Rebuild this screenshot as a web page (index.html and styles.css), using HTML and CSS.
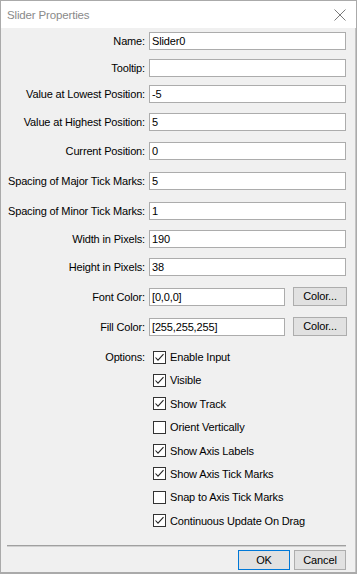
FILE: index.html
```html
<!DOCTYPE html>
<html>
<head>
<meta charset="utf-8">
<link rel="stylesheet" href="styles.css">
</head>
<body>
<div class="window">
  <div class="titlebar">
    <span class="title">Slider Properties</span>
    <svg class="close" width="12" height="12" viewBox="0 0 12 12"><path d="M0.5 0.5 L11.5 11.5 M11.5 0.5 L0.5 11.5" stroke="#7a7a7a" stroke-width="1" fill="none"/></svg>
  </div>
  <div class="content">
    <div class="form">
      <div class="row r1"><label>Name:</label><div class="field">Slider0</div></div>
      <div class="row r2"><label>Tooltip:</label><div class="field"></div></div>
      <div class="row r3"><label>Value at Lowest Position:</label><div class="field">-5</div></div>
      <div class="row r4"><label>Value at Highest Position:</label><div class="field">5</div></div>
      <div class="row r5"><label>Current Position:</label><div class="field">0</div></div>
      <div class="row r6"><label>Spacing of Major Tick Marks:</label><div class="field">5</div></div>
      <div class="row r7"><label>Spacing of Minor Tick Marks:</label><div class="field">1</div></div>
      <div class="row r8"><label>Width in Pixels:</label><div class="field">190</div></div>
      <div class="row r9"><label>Height in Pixels:</label><div class="field">38</div></div>
      <div class="row r10"><label>Font Color:</label><div class="combo"><div class="field short">[0,0,0]</div><div class="btn color">Color...</div></div></div>
      <div class="row r11"><label>Fill Color:</label><div class="combo"><div class="field short">[255,255,255]</div><div class="btn color">Color...</div></div></div>
      <div class="row opts"><label>Options:</label>
        <div class="checks">
          <div class="check"><span class="box on"><svg width="13" height="13" viewBox="0 0 13 13"><path d="M2.5 6.5 L5 9.2 L10.5 3.2" stroke="#222" stroke-width="1.1" fill="none"/></svg></span>Enable Input</div>
          <div class="check"><span class="box on"><svg width="13" height="13" viewBox="0 0 13 13"><path d="M2.5 6.5 L5 9.2 L10.5 3.2" stroke="#222" stroke-width="1.1" fill="none"/></svg></span>Visible</div>
          <div class="check"><span class="box on"><svg width="13" height="13" viewBox="0 0 13 13"><path d="M2.5 6.5 L5 9.2 L10.5 3.2" stroke="#222" stroke-width="1.1" fill="none"/></svg></span>Show Track</div>
          <div class="check"><span class="box"></span>Orient Vertically</div>
          <div class="check"><span class="box on"><svg width="13" height="13" viewBox="0 0 13 13"><path d="M2.5 6.5 L5 9.2 L10.5 3.2" stroke="#222" stroke-width="1.1" fill="none"/></svg></span>Show Axis Labels</div>
          <div class="check"><span class="box on"><svg width="13" height="13" viewBox="0 0 13 13"><path d="M2.5 6.5 L5 9.2 L10.5 3.2" stroke="#222" stroke-width="1.1" fill="none"/></svg></span>Show Axis Tick Marks</div>
          <div class="check"><span class="box"></span>Snap to Axis Tick Marks</div>
          <div class="check"><span class="box on"><svg width="13" height="13" viewBox="0 0 13 13"><path d="M2.5 6.5 L5 9.2 L10.5 3.2" stroke="#222" stroke-width="1.1" fill="none"/></svg></span>Continuous Update On Drag</div>
        </div>
      </div>
    </div>
    <div class="separator"></div>
    <div class="buttons">
      <div class="btn ok">OK</div>
      <div class="btn cancel">Cancel</div>
    </div>
  </div>
</div>
</body>
</html>
```
FILE: styles.css
```css
* { box-sizing: border-box; }
html, body { margin: 0; padding: 0; }
body {
  font-family: "Liberation Sans", Arial, sans-serif;
  font-size: 11px;
  letter-spacing: -0.15px;
  color: #000;
  background: #fff;
}
.window {
  width: 357px;
  height: 574px;
  border: 1px solid #aaaaaa;
  border-bottom-width: 2px;
  display: flex;
  flex-direction: column;
  background: #f0f0f0;
}
.titlebar {
  height: 27px;
  background: #fff;
  display: flex;
  align-items: center;
  justify-content: space-between;
  padding: 0 10px 0 6px;
  flex: none;
}
.title {
  font-size: 11.5px;
  color: #8a8a8a;
}
.close { display: block; }
.content {
  flex: 1;
  display: flex;
  flex-direction: column;
  padding: 4px 9px 0 0;
  border-right: 1px solid #c4c4c4;
}
.form {
  display: flex;
  flex-direction: column;
}
.row {
  display: grid;
  grid-template-columns: 144px 1fr;
  column-gap: 4px;
  align-items: center;
  height: 18px;
}
.r1 { margin-bottom: 9px; }
.r2 { margin-bottom: 8px; }
.r3 { margin-bottom: 10px; }
.r4 { margin-bottom: 11px; }
.r5 { margin-bottom: 12px; }
.r6 { margin-bottom: 12px; }
.r7 { margin-bottom: 10px; }
.r8 { margin-bottom: 10px; }
.r9 { margin-bottom: 11px; }
.r10 { margin-bottom: 12px; }
.r11 { margin-bottom: 14px; }
label {
  text-align: right;
  white-space: nowrap;
}
.field {
  height: 18px;
  background: #fff;
  border: 1px solid #acacac;
  padding: 0 2px;
  line-height: 16px;
  white-space: nowrap;
}
.combo {
  display: flex;
  gap: 8px;
  align-items: center;
}
.field.short { width: 136px; }
.btn {
  background: #e1e1e1;
  border: 1px solid #adadad;
  text-align: center;
  line-height: 17px;
  height: 19px;
}
.btn.color { width: 54px; }
.opts {
  align-items: start;
  height: auto;
}
.opts label { line-height: 16px; }
.checks {
  display: flex;
  flex-direction: column;
  gap: 7.4px;
  padding-left: 4px;
}
.check {
  display: flex;
  align-items: center;
  height: 16px;
  gap: 4px;
  white-space: nowrap;
}
.box {
  width: 13px;
  height: 13px;
  border: 1px solid #333;
  background: #fff;
  display: flex;
  align-items: center;
  justify-content: center;
  flex: none;
}
.box svg { display: block; margin: -1px; }
.separator {
  margin: 16px 0 0 6px;
  height: 2px;
  border-top: 1px solid #a0a0a0;
  border-bottom: 1px solid #d0d0d0;
}
.buttons {
  display: flex;
  justify-content: flex-end;
  gap: 4px;
  margin-top: 3px;
}
.btn.ok {
  width: 52px;
  border-color: #0078d7;
  height: 20px;
  line-height: 18px;
}
.btn.cancel {
  width: 52px;
  height: 20px;
  line-height: 18px;
}
```
